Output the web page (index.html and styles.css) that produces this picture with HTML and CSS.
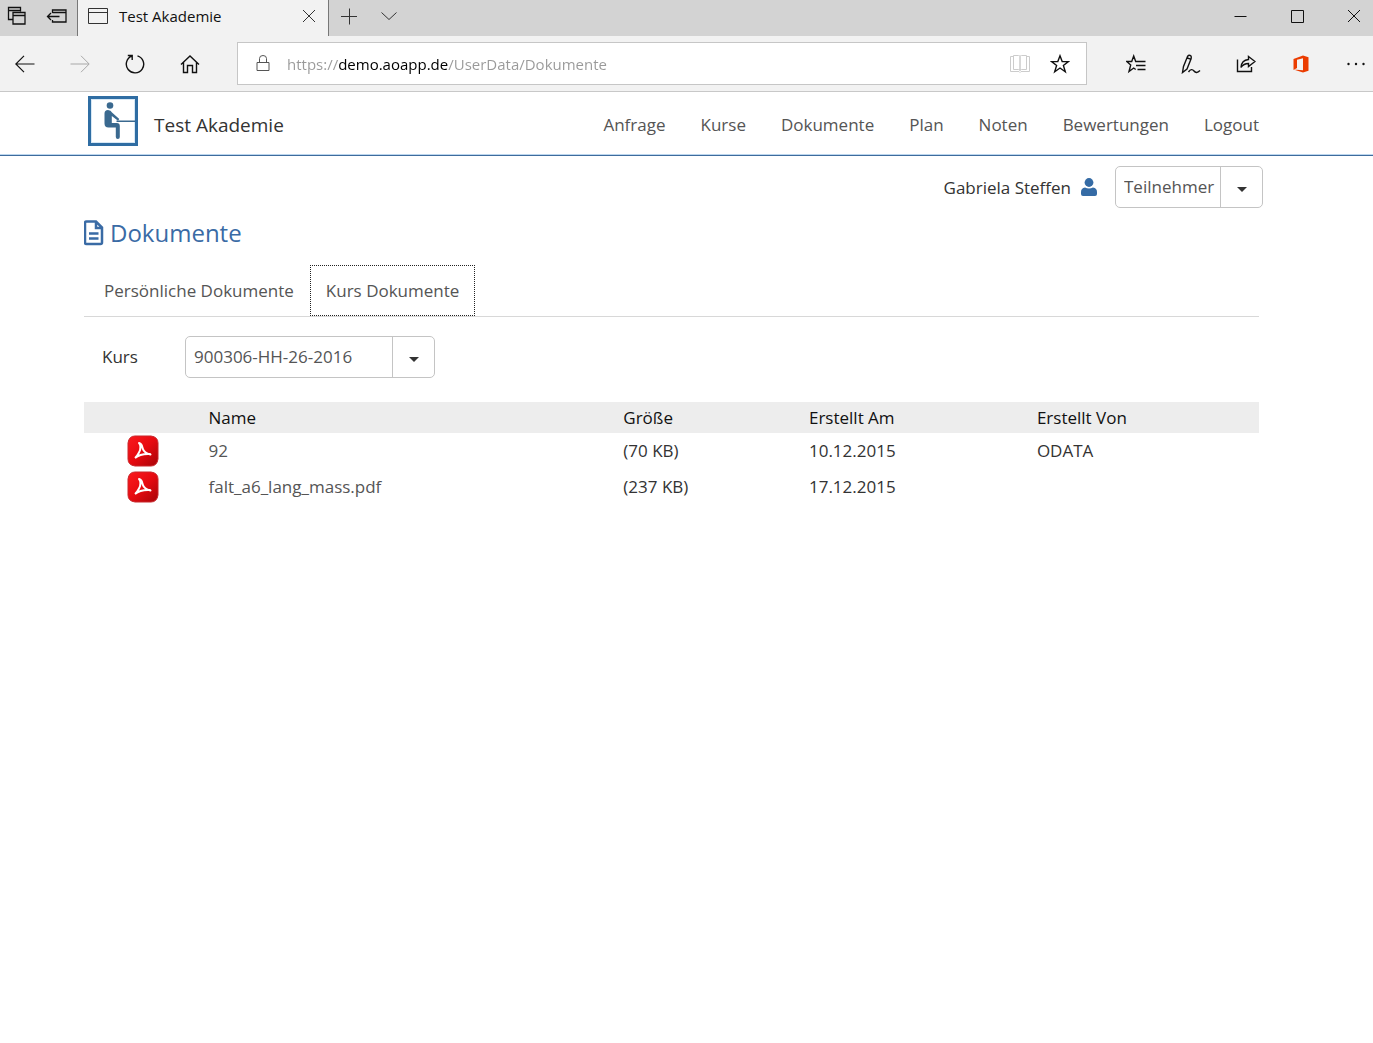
FILE: index.html
```html
<!DOCTYPE html>
<html lang="de">
<head>
<meta charset="utf-8">
<meta name="viewport" content="width=device-width, initial-scale=1">
<title>Test Akademie</title>
<link rel="stylesheet" href="styles.css">
</head>
<body>
<div class="browser">
  <div class="tabstrip">
    <div class="tabtools">
      <button type="button" class="chrome-btn" aria-label="Beiseitegelegte Tabs"><svg width="20" height="20" viewBox="0 0 20 20"><path d="M5.500 13.500h-4v-12h12v4M1.500 4.500h12M6 6.500h12v11.500h-12zM6 9.500h12" stroke-width="1.300"/></svg></button>
      <button type="button" class="chrome-btn" aria-label="Tabs beiseitelegen"><svg width="22" height="20" viewBox="0 0 22 20"><path d="M6.500 7v-3h13.500v12h-13.500v-2M6.500 6.500h13.500M1.500 10.500h12M5 7l-3.500 3.500 3.500 3.500" stroke-width="1.300"/></svg></button>
    </div>
    <div class="tab">
      <svg width="20" height="18" viewBox="0 0 20 18"><path d="M.5 1.500h19v15h-19zM.5 5.500h19"/></svg>
      <span class="tab-title">Test Akademie</span>
      <button type="button" class="tab-close" aria-label="Tab schließen"><svg width="14" height="14" viewBox="0 0 14 14"><path d="M1 1l12 12M13 1l-12 12"/></svg></button>
    </div>
    <button type="button" class="chrome-btn wide" aria-label="Neuer Tab"><svg width="18" height="18" viewBox="0 0 18 18"><path d="M1 9.500h16M9.500 1.500v16"/></svg></button>
    <button type="button" class="chrome-btn wide" aria-label="Tabvorschau"><svg width="16" height="10" viewBox="0 0 16 10"><path d="M.5 1.500l7.500 7 7.500-7"/></svg></button>
    <div class="window-controls">
      <button type="button" class="chrome-btn" aria-label="Minimieren"><svg width="13" height="13" viewBox="0 0 13 13"><path d="M.5 6.500h12"/></svg></button>
      <button type="button" class="chrome-btn" aria-label="Maximieren"><svg width="13" height="13" viewBox="0 0 13 13"><path d="M.5 .5h12v12h-12z"/></svg></button>
      <button type="button" class="chrome-btn" aria-label="Schließen"><svg width="14" height="14" viewBox="0 0 14 14"><path d="M1 1l12 12M13 1l-12 12"/></svg></button>
    </div>
  </div>
  <div class="toolbar">
    <div class="toolbar-group">
      <button type="button" class="chrome-btn" aria-label="Zurück"><svg width="20" height="18" viewBox="0 0 20 18"><path d="M19.500 9h-18.500M9 .8l-8.200 8.200 8.200 8.200" stroke-width="1.200"/></svg></button>
      <button type="button" class="chrome-btn" disabled aria-label="Vorwärts"><svg width="20" height="18" viewBox="0 0 20 18"><path d="M.5 9h18.500M11 .8l8.200 8.200-8.200 8.200"/></svg></button>
      <button type="button" class="chrome-btn" aria-label="Aktualisieren"><svg width="20" height="20" viewBox="0 0 20 20"><path d="M12.500 1.800a8.700 8.700 0 1 1-5.600.2M2.800 1.500h4.400v4.500" stroke-width="1.400"/></svg></button>
      <button type="button" class="chrome-btn" aria-label="Startseite"><svg width="20" height="20" viewBox="0 0 20 20"><path d="M1 10.500l9-8.500 9 8.500M3.500 8.500v10h4v-7h5v7h4v-10" stroke-width="1.400"/></svg></button>
    </div>
    <div class="address">
      <svg class="lock" width="14" height="18" viewBox="0 0 14 18"><path d="M1 7.500h12v8h-12zM3.500 7.500v-4a3.500 3 0 0 1 7 0v4"/></svg>
      <input class="url" type="text" aria-label="Adresse" value="https://demo.aoapp.de/UserData/Dokumente" spellcheck="false">
      <button type="button" class="chrome-btn" disabled aria-label="Leseansicht"><svg width="20" height="20" viewBox="0 0 20 20"><path d="M3.500 1.500h5q1.500 0 1.500 1v14q0-1-1.500-1h-5zM16.500 1.500h-5q-1.500 0-1.500 1v14q0-1 1.500-1h5zM3 2.500h-2.500v15h8.500l1 1 1-1h8.500v-15h-2.500"/></svg></button>
      <button type="button" class="chrome-btn" aria-label="Zu Favoriten hinzufügen"><svg width="20" height="20" viewBox="0 0 20 20"><path d="M10 1.800l2.200 5.800h6.200l-5 3.900 1.900 6.300-5.300-3.800-5.300 3.800 1.900-6.300-5-3.900h6.200z" stroke-width="1.400"/></svg></button>
    </div>
    <div class="toolbar-group">
      <button type="button" class="chrome-btn" aria-label="Hub"><svg width="20" height="20" viewBox="0 0 20 20"><path d="M12 7.500h-2.300l-2-5.500-2 5.500h-5l4 3.500-1.700 6.500 4.700-3.500 2 1.500M11.500 7.500h8M10 11.500h9.500M11.500 15.500h8" stroke-width="1.400"/></svg></button>
      <button type="button" class="chrome-btn" aria-label="Webseitennotiz"><svg width="20" height="20" viewBox="0 0 20 20"><path d="M1.500 18.500l1-6 4-10q1.500-2 3.500-.5.500 1 0 3l-4 10-4.500 3.500zM6.500 4l3 1.200M7.500 18c2-3 4-3 5.500-1s3.500 2 6-.5" stroke-width="1.400"/></svg></button>
      <button type="button" class="chrome-btn" aria-label="Freigeben"><svg width="20" height="20" viewBox="0 0 20 20"><path d="M1.500 5.500v12h14v-4.500M12.500 2.500l6.500 5-6.500 5v-3q-5 0-7.500 4 .5-7.500 7.500-8z" stroke-width="1.400"/></svg></button>
      <button type="button" class="chrome-btn" aria-label="Office"><svg class="office" width="16" height="18" viewBox="0 0 16 18"><path d="M.5 4L10 .5l5.500 1.700v13.600l-5.500 1.700-9.500-3 9.500.8v-12l-6 1.500v8.200l-3.500 2z"/></svg></button>
      <button type="button" class="chrome-btn" aria-label="Weitere Aktionen"><svg class="dots" width="20" height="4" viewBox="0 0 20 4"><circle cx="2.500" cy="2" r="1.200"/><circle cx="10" cy="2" r="1.200"/><circle cx="17.500" cy="2" r="1.200"/></svg></button>
    </div>
  </div>
</div>

<header class="site-header">
  <a class="brand" href="#">
    <svg width="50" height="50" viewBox="0 0 50 50" aria-hidden="true"><path fill="#2f6da3" d="M0 0h50v50H0z"/><path fill="#d7e8f5" d="M3 3h44v44H3z"/><path fill="#fff" d="M4 4h42v42H4z"/><g fill="#3a698f"><circle cx="22" cy="9.500" r="3.300"/><path d="M16.500 17.500q0-3.500 3.500-3.500 3 0 4 2.500l7.300 6.500-1.300 1.700-6.200-4.700v7h5q3 0 3 3v11q0 2-2 2t-2-2v-9.500h-7.300q-4 0-4-4z"/><path d="M28.500 24.500h18.500v1.500h-18.500z"/></g></svg>
    <span>Test Akademie</span>
  </a>
  <nav class="main-nav" aria-label="Hauptmenü">
    <a href="#">Anfrage</a>
    <a href="#">Kurse</a>
    <a href="#">Dokumente</a>
    <a href="#">Plan</a>
    <a href="#">Noten</a>
    <a href="#">Bewertungen</a>
    <a href="#">Logout</a>
  </nav>
</header>

<main class="content">
  <div class="user-row">
    <span class="user-name">Gabriela Steffen</span>
    <svg width="16" height="18" viewBox="0 0 16 18" aria-hidden="true"><circle cx="8" cy="4.500" r="4.400"/><path d="M0 14q0-4 4-4.500 4 2 8 0 4 .5 4 4.500v2q0 2-2 2h-12q-2 0-2-2z"/></svg>
    <div class="select role">
      <select aria-label="Rolle"><option>Teilnehmer</option></select>
      <span class="caret"></span>
    </div>
  </div>

  <h1 class="page-title">
    <svg width="20" height="26" viewBox="0 0 20 26" aria-hidden="true"><path d="M3 1.500h9l6 6v15q0 1.500-1.500 1.500h-14q-1.500 0-1.500-1.500v-19.500q0-1.500 1.500-1.500zM12 1.500v6.500h6M5 13.500h9.500M5 18.500h9.500"/></svg>
    Dokumente
  </h1>

  <div class="tabs" role="tablist">
    <button type="button" role="tab" aria-selected="false">Persönliche Dokumente</button>
    <button type="button" role="tab" aria-selected="true" class="active">Kurs Dokumente</button>
  </div>

  <div class="filter">
    <label for="kurs">Kurs</label>
    <div class="select course">
      <select id="kurs"><option>900306-HH-26-2016</option></select>
      <span class="caret"></span>
    </div>
  </div>

  <table class="documents">
    <colgroup><col class="col-icon"><col class="col-name"><col class="col-size"><col class="col-date"><col></colgroup>
    <thead>
      <tr><th></th><th scope="col">Name</th><th scope="col">Größe</th><th scope="col">Erstellt Am</th><th scope="col">Erstellt Von</th></tr>
    </thead>
    <tbody>
      <tr>
        <td class="file"><svg width="32" height="32" viewBox="0 0 32 32" role="img" aria-label="PDF"><defs><linearGradient id="red" x1="0" y1="0" x2="1" y2="1"><stop offset="0" stop-color="#fb1a1e"/><stop offset=".5" stop-color="#e60a10"/><stop offset="1" stop-color="#a60408"/></linearGradient></defs><path fill="url(#red)" stroke="#c9262b" d="M8 1h16q7 1 7 7v16q-1 7-7 7h-16q-7-1-7-7v-16q1-7 7-7z"/><path fill="none" stroke="#fff" stroke-width="2" stroke-linecap="round" d="M12 8q3 1 3.500 5 1.500 5 8 6.500M12 8q3 4 0 9.500-2 4-4 5.500 5-4.500 15-4"/></svg></td>
        <td><a href="#">92</a></td><td>(70 KB)</td><td>10.12.2015</td><td>ODATA</td>
      </tr>
      <tr>
        <td class="file"><svg width="32" height="32" viewBox="0 0 32 32" role="img" aria-label="PDF"><path fill="url(#red)" stroke="#c9262b" d="M8 1h16q7 1 7 7v16q-1 7-7 7h-16q-7-1-7-7v-16q1-7 7-7z"/><path fill="none" stroke="#fff" stroke-width="2" stroke-linecap="round" d="M12 8q3 1 3.500 5 1.500 5 8 6.500M12 8q3 4 0 9.500-2 4-4 5.500 5-4.500 15-4"/></svg></td>
        <td><a href="#">falt_a6_lang_mass.pdf</a></td><td>(237 KB)</td><td>17.12.2015</td><td></td>
      </tr>
    </tbody>
  </table>
</main>
</body>
</html>
```
FILE: styles.css
```css
* { box-sizing: border-box; }

body {
  margin: 0;
  background: #fff;
  color: #333;
  font: 17px/24px "Open Sans", "Noto Sans", sans-serif;
}

svg { display: block; flex: none; }
a { color: inherit; text-decoration: none; }
button, input, select { font: inherit; color: inherit; }

/* Browser frame */
.browser { font-size: 15px; line-height: 20px; color: #111; }
.browser svg { fill: none; stroke: currentColor; }

.chrome-btn, .tab-close {
  display: flex;
  align-items: center;
  justify-content: center;
  flex: none;
  width: 34px;
  height: 32px;
  padding: 0;
  border: 0;
  background: none;
}
.chrome-btn.wide { width: 40px; color: #333; }
.chrome-btn:disabled { color: #a8a8a8; }

.tabstrip { display: flex; height: 36px; background: #d3d3d3; }
.tabtools { display: flex; gap: 6px; margin-right: 3px; }
.tab {
  display: flex;
  align-items: center;
  gap: 11px;
  width: 252px;
  padding: 0 2px 4px 10px;
  border: solid #777;
  border-width: 0 1px;
  background: #f2f2f2;
}
.tab svg { color: #333; }
.tab-title { flex: 1; }
.window-controls { display: flex; gap: 19px; margin-left: auto; }
.window-controls .chrome-btn { width: 38px; }

.toolbar {
  display: flex;
  align-items: center;
  height: 56px;
  padding-left: 8px;
  border-bottom: 1px solid #c8c8c8;
  background: #f2f2f2;
}
.toolbar-group { display: flex; gap: 21px; }
.address {
  display: flex;
  align-items: center;
  flex: 1;
  height: 43px;
  margin: 0 32px 0 30px;
  padding: 0 6px 0 18px;
  border: 1px solid #c6c6c6;
  background: #fff;
}
.address .chrome-btn { width: 40px; }
.address .chrome-btn:disabled { color: #ccc; }
.lock { color: #555; }
.url {
  flex: 1;
  min-width: 0;
  margin-left: 17px;
  padding: 0;
  border: 0;
  outline: 0;
  background: linear-gradient(to right, #999 51px, #000 51px, #000 161px, #999 161px);
  -webkit-background-clip: text;
  background-clip: text;
  color: transparent;
  caret-color: #000;
}
.office path { fill: #eb3c00; stroke: none; }
.dots circle { fill: #111; stroke: none; }

/* Site header */
.site-header {
  display: flex;
  align-items: center;
  justify-content: space-between;
  height: 64px;
  padding: 0 114px 6px 88px;
  border-bottom: 1px solid #3e6c9d;
  box-shadow: inset 0 -1px #bcd6ee;
}
.brand { display: flex; align-items: center; gap: 16px; font-size: 19px; }
.brand span { padding-top: 8px; }
.main-nav { display: flex; gap: 35px; padding-top: 8px; color: #555; }

/* Page */
.content { padding: 10px 114px 40px 84px; }
.user-row {
  display: flex;
  align-items: center;
  justify-content: flex-end;
  gap: 10px;
  margin-right: -4px;
}
.user-row svg { fill: #356ba5; }
.user-name { padding-top: 2px; }

.select {
  display: grid;
  grid-template-columns: 1fr 42px;
  height: 42px;
  border: 1px solid #c4c4c4;
  border-radius: 5px;
  color: #555;
}
.select select {
  grid-area: 1 / 1 / 2 / 3;
  width: 100%;
  padding: 0 42px 0 8px;
  border: 0;
  border-radius: 5px;
  background: none;
  appearance: none;
}
.caret {
  grid-area: 1 / 2;
  display: grid;
  place-items: center;
  border-left: 1px solid #c4c4c4;
  pointer-events: none;
}
.caret::after {
  content: "";
  margin-top: 4px;
  border: solid transparent;
  border-width: 5px 5px 0;
  border-top-color: #333;
}
.role { width: 148px; margin-left: 8px; }
.course { width: 250px; }

.page-title {
  display: flex;
  align-items: center;
  gap: 6px;
  margin: 8px 0 15px;
  color: #3a6ba5;
  font-size: 24px;
  font-weight: 400;
  line-height: 34px;
}
.page-title svg { fill: none; stroke: currentColor; stroke-width: 2.5; }

.tabs { display: flex; padding-left: 4px; border-bottom: 1px solid #d8d8d8; }
.tabs button {
  height: 51px;
  padding: 0 15px;
  border: 1px solid transparent;
  background: none;
  color: #555;
}
.tabs .active { margin-bottom: -1px; border: 1px dotted #222; background: #fff; }

.filter { display: flex; align-items: center; margin: 19px 0 24px 18px; }
.filter label { width: 83px; }

.documents { width: 100%; border-collapse: collapse; table-layout: fixed; }
.col-icon { width: 10.6%; }
.col-name { width: 35.3%; }
.col-size { width: 15.8%; }
.col-date { width: 19.4%; }
.documents th {
  height: 31px;
  padding: 0;
  background: #ededed;
  color: #111;
  font-weight: 400;
  text-align: left;
}
.documents td { height: 36px; padding: 0; }
.documents td a { color: #555; }
.documents .file { padding-left: 43px; }
```
